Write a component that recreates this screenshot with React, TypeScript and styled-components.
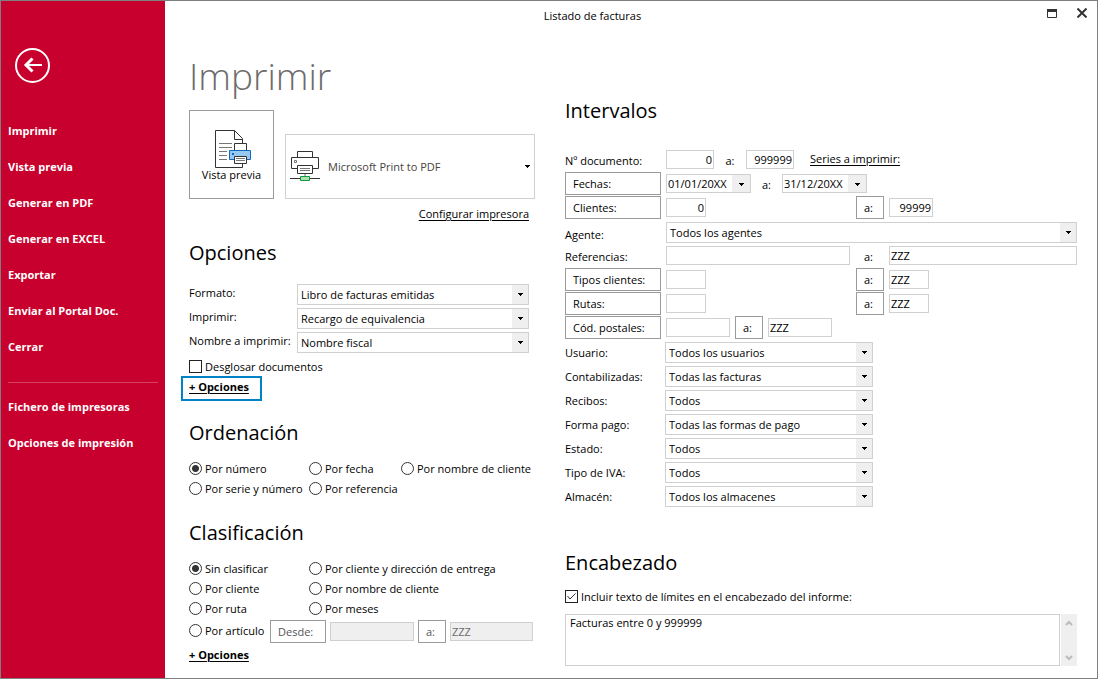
import React from "react";
import styled, { createGlobalStyle } from "styled-components";

const GlobalStyle = createGlobalStyle`
  *, *::before, *::after { box-sizing: border-box; }
  body { margin: 0; background: #fff; }
  body, button, input, select, textarea {
    font-family: "Open Sans", "Noto Sans", sans-serif;
    font-size: 11px;
    color: #000;
  }
  button, input, select, textarea { margin: 0; border-radius: 0; outline: none; }
`;

const line = "#d0d0d0";
const frame = "#9b9b9b";

const Window = styled.div`
  display: flex;
  min-height: 100vh;
  border: 1px solid #7f7f7f;
  background: #fff;
`;

const Sidebar = styled.aside`
  flex: none;
  width: 164px;
  padding: 47px 7px 0;
  background: #c8002d;
`;

const BackButton = styled.button`
  display: block;
  width: 35px;
  height: 35px;
  margin: 0 0 30px 7px;
  padding: 0;
  border: 0;
  background: none;
`;

const Nav = styled.nav`
  display: flex;
  flex-direction: column;
`;

const NavLink = styled.a`
  height: 36px;
  line-height: 36px;
  font-weight: 700;
  color: #fff;
  text-decoration: none;
  white-space: nowrap;
`;

const Divider = styled.hr`
  width: 100%;
  height: 1px;
  margin: 17px 0 6px;
  border: 0;
  background: #d8405f;
`;

const Content = styled.div`
  flex: 1;
  min-width: 0;
`;

const TitleBar = styled.header`
  display: flex;
  height: 31px;
`;

const WindowTitle = styled.div`
  flex: 1;
  line-height: 29px;
  text-align: center;
`;

const Controls = styled.div`
  display: flex;
  justify-content: flex-end;
  gap: 20px;
  width: 77px;
  height: 24px;
  padding-right: 10px;
`;

const ControlButton = styled.button`
  width: 10px;
  padding: 0;
  border: 0;
  background: none;
  line-height: 0;
`;

const Columns = styled.main`
  display: grid;
  grid-template-columns: 346px minmax(0, 1fr);
  column-gap: 30px;
  padding: 20px 20px 12px 24px;
`;

const Column = styled.div<{ $top?: number }>`
  padding-top: ${(p) => p.$top ?? 0}px;
`;

const PageTitle = styled.h1`
  margin: 0 0 10px;
  font-size: 37px;
  line-height: 48px;
  font-weight: 300;
  color: #6c6c6c;
`;

const Heading = styled.h2<{ $top: number; $bottom: number }>`
  margin: ${(p) => p.$top}px 0 ${(p) => p.$bottom}px;
  font-size: 20px;
  line-height: 28px;
  font-weight: 400;
`;

const PrinterRow = styled.div`
  display: flex;
  align-items: flex-end;
  gap: 11px;
`;

const PreviewButton = styled.button`
  display: flex;
  flex-direction: column;
  align-items: center;
  width: 85px;
  height: 89px;
  padding: 19px 0 0;
  border: 1px solid ${frame};
  background: #fff;
  line-height: 12px;
`;

const PrinterPicker = styled.div`
  position: relative;
  flex: 1;
  height: 65px;

  > svg:first-child { position: absolute; left: 5px; top: 17px; pointer-events: none; }
  > svg:last-child { position: absolute; right: 4px; top: 31px; pointer-events: none; }
`;

const PrinterSelect = styled.select`
  appearance: none;
  width: 100%;
  height: 100%;
  padding: 0 20px 0 42px;
  border: 1px solid ${line};
  background: #fff;
  color: #444;
`;

const LinkRow = styled.div`
  display: flex;
  justify-content: flex-end;
  height: 20px;
  margin-top: 5px;
  padding-right: 6px;
`;

const TextLink = styled.a<{ $bold?: boolean; $height?: number }>`
  display: inline-block;
  line-height: ${(p) => p.$height ?? 20}px;
  font-weight: ${(p) => (p.$bold ? 700 : 400)};
  color: #000;
  text-underline-offset: 2px;
  white-space: nowrap;
`;

const Highlight = styled.div`
  display: flex;
  align-items: flex-start;
  width: 81px;
  height: 25px;
  margin-left: -8px;
  padding-left: 6px;
  border: 2px solid #0083c6;
`;

const Row = styled.div<{ $label?: number }>`
  display: grid;
  grid-template-columns: ${(p) => p.$label ?? 101}px minmax(0, 1fr);
  align-items: start;
  height: 24px;
`;

const Cells = styled.div`
  display: flex;
  align-items: flex-start;
`;

const RangeCells = styled.div`
  display: grid;
  grid-template-columns: 190px 28px minmax(0, 1fr);
  align-items: start;
`;

const Label = styled.label<{ $height?: number }>`
  line-height: ${(p) => p.$height ?? 26}px;
  white-space: nowrap;
`;

const To = styled.span<{ $width: number }>`
  width: ${(p) => p.$width}px;
  line-height: 26px;
  text-align: center;
`;

const BoxButton = styled.button<{ $width: number; $gap?: number }>`
  flex: none;
  width: ${(p) => p.$width}px;
  height: 23px;
  margin-left: ${(p) => p.$gap ?? 0}px;
  padding: 0 7px;
  border: 1px solid ${frame};
  background: #fff;
  text-align: left;
  white-space: nowrap;

  &:disabled { color: #555; }
`;

const Field = styled.input<{ $width?: number; $gap?: number; $right?: boolean }>`
  width: ${(p) => (p.$width ? `${p.$width}px` : `calc(100% - ${p.$gap ?? 0}px)`)};
  height: 19px;
  margin: 2px 0 0 ${(p) => p.$gap ?? 0}px;
  padding: 0 1px 1px;
  border: 1px solid ${line};
  background: #fff;
  text-align: ${(p) => (p.$right ? "right" : "left")};

  &:disabled { background: #efefef; color: #6d6d6d; }
`;

const DateBox = styled.div`
  display: flex;
  width: 85px;
  height: 19px;
  margin-top: 2px;
  border: 1px solid ${line};
`;

const DateInput = styled.input`
  flex: 1;
  min-width: 0;
  padding: 0 1px 1px;
  border: 0;
`;

const DropButton = styled.button`
  display: flex;
  align-items: center;
  justify-content: center;
  width: 18px;
  padding: 2px 0 0 1px;
  border: 0;
  background: #efefef;
`;

const SelectBox = styled.div<{ $width?: number }>`
  position: relative;
  width: ${(p) => (p.$width ? `${p.$width}px` : "100%")};
  height: 21px;
  margin-top: 2px;

  > svg { position: absolute; right: 5px; top: 9px; pointer-events: none; }
`;

const SelectInput = styled.select`
  appearance: none;
  width: 100%;
  height: 100%;
  padding: 0 20px 0 3px;
  border: 1px solid ${line};
  background: linear-gradient(#efefef, #efefef) right / 16px 100% no-repeat #fff;
`;

const Choice = styled.label<{ $height?: number; $top?: number }>`
  display: flex;
  align-items: center;
  gap: 3px;
  height: ${(p) => p.$height ?? 20}px;
  padding-top: ${(p) => p.$top ?? 0}px;
  white-space: nowrap;
`;

const Radio = styled.input.attrs({ type: "radio" })`
  appearance: none;
  flex: none;
  width: 13px;
  height: 13px;
  border: 1px solid #333;
  border-radius: 50%;
  background: #fff;

  &:checked { background: radial-gradient(circle, #333 3px, #fff 4px); }
`;

const CheckWrap = styled.span`
  position: relative;
  display: block;
  width: 13px;
  height: 13px;

  > svg { position: absolute; left: 2px; top: 3px; pointer-events: none; }
`;

const Check = styled.input.attrs({ type: "checkbox" })`
  appearance: none;
  display: block;
  width: 13px;
  height: 13px;
  border: 1px solid #222;
  background: #fff;
`;

const RadioGrid = styled.div<{ $cols: string }>`
  display: grid;
  grid-template-columns: ${(p) => p.$cols};
`;

const ArticleRow = styled.div`
  display: flex;
  height: 27px;
  padding-top: 2px;
`;

const ArticleChoice = styled.div`
  width: 81px;
`;

const HeaderText = styled.div`
  display: flex;
  gap: 1px;
  height: 52px;
  margin-top: 8px;
`;

const TextArea = styled.textarea`
  flex: 1;
  min-width: 0;
  padding: 0 4px;
  border: 1px solid ${line};
  resize: none;
  overflow: hidden;
  line-height: 16px;
`;

const ScrollBar = styled.div`
  display: flex;
  flex-direction: column;
  justify-content: space-between;
  width: 16px;
  background: #efefef;
`;

const ScrollButton = styled.button`
  height: 17px;
  padding: 0;
  border: 0;
  background: none;
  line-height: 0;
`;

const SeriesLink = styled(TextLink)`
  margin-left: 16px;
`;

const Arrow = () => (
  <svg width="6" height="3" viewBox="0 0 6 3" aria-hidden="true" shapeRendering="crispEdges">
    <path d="M0 0h5v1H0zM1 1h3v1H1zM2 2h1v1H2z" fill="#000" />
  </svg>
);

const Chevron = ({ down }: { down?: boolean }) => (
  <svg width="8" height="6" viewBox="0 0 8 6" aria-hidden="true">
    <path d={down ? "M1 1l3 3 3-3" : "M1 5l3-3 3 3"} fill="none" stroke="#bcbcbc" strokeWidth="2" />
  </svg>
);

const PreviewIcon = () => (
  <svg width="41" height="39" viewBox="-4 0 41 39" fill="none" aria-hidden="true">
    <path d="M27.500 34v3.500H.5V.5h19l8 8V14M19.500.5v9h8" stroke="#333" />
    <path d="M4 13.500h13M4 17.500h13M4 21.500h8M4 25.500h8M4 29.500h8" stroke="#777" />
    <path d="M19.500 13.500h12v7h-12z" fill="#fff" stroke="#333" />
    <path d="M14.500 20.500h21v9h-21z" fill="#97c9f0" stroke="#1268b8" />
    <path d="M17 23h2v2h-2z" fill="#1268b8" />
    <path d="M19.500 26.500h12v7h-12z" fill="#fff" stroke="#333" />
    <path d="M21 28.500h9M21 30.500h9" stroke="#777" />
  </svg>
);

const PrinterIcon = () => (
  <svg width="30" height="31" viewBox="0 0 30 31" fill="none" aria-hidden="true">
    <path d="M7.500.5h15v6h-15z" fill="#fff" stroke="#333" />
    <path d="M1.500 6.500h27v11h-27z" fill="#fff" stroke="#333" />
    <path d="M4.500 9.500h2v2h-2z" stroke="#777" />
    <path d="M7.500 14.500h15v8h-15z" fill="#fff" stroke="#333" />
    <path d="M10 17.500h10M10 19.500h10" stroke="#777" />
    <path d="M15 23v2" stroke="#b5b5b5" strokeWidth="2" />
    <path d="M0 27.500h30" stroke="#333" />
    <path d="M10.500 25.500h9v4h-9z" fill="#b0dfb4" stroke="#0f9b40" />
  </svg>
);

const Select = ({ id, value, width }: { id: string; value: string; width?: number }) => (
  <SelectBox $width={width}>
    <SelectInput id={id} defaultValue={value}>
      <option>{value}</option>
    </SelectInput>
    <Arrow />
  </SelectBox>
);

const DateField = ({ id, value, label }: { id: string; value: string; label: string }) => (
  <DateBox>
    <DateInput id={id} defaultValue={value} aria-label={label} />
    <DropButton type="button" aria-label={`Calendario ${label}`}>
      <Arrow />
    </DropButton>
  </DateBox>
);

const RadioChoice = ({ name, text, checked }: { name: string; text: string; checked?: boolean }) => (
  <Choice>
    <Radio name={name} defaultChecked={checked} />
    {text}
  </Choice>
);

const mainLinks = [
  "Imprimir",
  "Vista previa",
  "Generar en PDF",
  "Generar en EXCEL",
  "Exportar",
  "Enviar al Portal Doc.",
  "Cerrar",
];

const optionRows = [
  ["formato", "Formato:", "Libro de facturas emitidas"],
  ["imprimir", "Imprimir:", "Recargo de equivalencia"],
  ["nombre", "Nombre a imprimir:", "Nombre fiscal"],
];

const filterRows = [
  ["usuario", "Usuario:", "Todos los usuarios"],
  ["contabilizadas", "Contabilizadas:", "Todas las facturas"],
  ["recibos", "Recibos:", "Todos"],
  ["forma-pago", "Forma pago:", "Todas las formas de pago"],
  ["estado", "Estado:", "Todos"],
  ["tipo-iva", "Tipo de IVA:", "Todos"],
  ["almacen", "Almacén:", "Todos los almacenes"],
];

export default function App() {
  return (
    <>
      <GlobalStyle />
      <Window>
        <Sidebar>
          <BackButton type="button" aria-label="Volver">
            <svg width="35" height="35" viewBox="0 0 35 35" fill="none" stroke="#fff" strokeWidth="2" aria-hidden="true">
              <circle cx="17.500" cy="17.500" r="16.500" />
              <path d="M27 17H11" />
              <path d="M17.500 10.500L11 17l6.500 6.500" strokeWidth="3" />
            </svg>
          </BackButton>
          <Nav>
            {mainLinks.map((text) => (
              <NavLink href="#" key={text}>{text}</NavLink>
            ))}
            <Divider />
            <NavLink href="#">Fichero de impresoras</NavLink>
            <NavLink href="#">Opciones de impresión</NavLink>
          </Nav>
        </Sidebar>

        <Content>
          <TitleBar>
            <WindowTitle>Listado de facturas</WindowTitle>
            <Controls>
              <ControlButton type="button" aria-label="Maximizar">
                <svg width="10" height="9" viewBox="0 0 10 9" aria-hidden="true">
                  <path d="M.5 1.500h9v7h-9z" fill="none" stroke="#333" />
                  <path d="M0 0h10v3H0z" fill="#333" />
                </svg>
              </ControlButton>
              <ControlButton type="button" aria-label="Cerrar ventana">
                <svg width="10" height="10" viewBox="0 0 10 10" aria-hidden="true">
                  <path d="M.5.5l9 9M9.500.5l-9 9" stroke="#333" strokeWidth="2" />
                </svg>
              </ControlButton>
            </Controls>
          </TitleBar>

          <Columns>
            <Column>
              <PageTitle>Imprimir</PageTitle>
              <PrinterRow>
                <PreviewButton type="button">
                  <PreviewIcon />
                  Vista previa
                </PreviewButton>
                <PrinterPicker>
                  <PrinterIcon />
                  <PrinterSelect aria-label="Impresora" defaultValue="Microsoft Print to PDF">
                    <option>Microsoft Print to PDF</option>
                  </PrinterSelect>
                  <Arrow />
                </PrinterPicker>
              </PrinterRow>
              <LinkRow>
                <TextLink href="#">Configurar impresora</TextLink>
              </LinkRow>

              <Heading $top={15} $bottom={15}>Opciones</Heading>
              {optionRows.map(([id, label, value]) => (
                <Row $label={108} key={id}>
                  <Label htmlFor={id} $height={22}>{label}</Label>
                  <Select id={id} value={value} width={232} />
                </Row>
              ))}
              <Choice $height={22} $top={2}>
                <Check />
                Desglosar documentos
              </Choice>
              <Highlight>
                <TextLink href="#" $bold $height={18}>+ Opciones</TextLink>
              </Highlight>

              <Heading $top={18} $bottom={11}>Ordenación</Heading>
              <RadioGrid $cols="120px 92px 1fr">
                <RadioChoice name="orden" text="Por número" checked />
                <RadioChoice name="orden" text="Por fecha" />
                <RadioChoice name="orden" text="Por nombre de cliente" />
                <RadioChoice name="orden" text="Por serie y número" />
                <RadioChoice name="orden" text="Por referencia" />
              </RadioGrid>

              <Heading $top={21} $bottom={11}>Clasificación</Heading>
              <RadioGrid $cols="120px 1fr">
                <RadioChoice name="clase" text="Sin clasificar" checked />
                <RadioChoice name="clase" text="Por cliente y dirección de entrega" />
                <RadioChoice name="clase" text="Por cliente" />
                <RadioChoice name="clase" text="Por nombre de cliente" />
                <RadioChoice name="clase" text="Por ruta" />
                <RadioChoice name="clase" text="Por meses" />
              </RadioGrid>
              <ArticleRow>
                <ArticleChoice>
                  <RadioChoice name="clase" text="Por artículo" />
                </ArticleChoice>
                <BoxButton type="button" disabled $width={56}>Desde:</BoxButton>
                <Field disabled aria-label="Desde artículo" $width={84} $gap={4} />
                <BoxButton type="button" disabled $width={28} $gap={4}>a:</BoxButton>
                <Field disabled aria-label="Hasta artículo" defaultValue="ZZZ" $width={83} $gap={4} />
              </ArticleRow>
              <TextLink href="#" $bold>+ Opciones</TextLink>
            </Column>

            <Column $top={45}>
              <Heading $top={0} $bottom={23}>Intervalos</Heading>
              <Row>
                <Label htmlFor="doc-desde">Nº documento:</Label>
                <Cells>
                  <Field id="doc-desde" defaultValue="0" $width={48} $right />
                  <To $width={32}>a:</To>
                  <Field aria-label="Hasta documento" defaultValue="999999" $width={48} $right />
                  <SeriesLink href="#" $height={22}>Series a imprimir:</SeriesLink>
                </Cells>
              </Row>
              <Row>
                <BoxButton type="button" $width={96}>Fechas:</BoxButton>
                <Cells>
                  <DateField id="fecha-desde" value="01/01/20XX" label="Desde fecha" />
                  <To $width={31}>a:</To>
                  <DateField id="fecha-hasta" value="31/12/20XX" label="Hasta fecha" />
                </Cells>
              </Row>
              <Row>
                <BoxButton type="button" $width={96}>Clientes:</BoxButton>
                <RangeCells>
                  <Field aria-label="Desde cliente" defaultValue="0" $width={40} $right />
                  <BoxButton type="button" $width={28}>a:</BoxButton>
                  <Field aria-label="Hasta cliente" defaultValue="99999" $width={44} $gap={5} $right />
                </RangeCells>
              </Row>
              <Row>
                <Label htmlFor="agente" $height={29}>Agente:</Label>
                <Select id="agente" value="Todos los agentes" />
              </Row>
              <Row>
                <Label htmlFor="referencias">Referencias:</Label>
                <RangeCells>
                  <Field id="referencias" $width={184} />
                  <To $width={25}>a:</To>
                  <Field aria-label="Hasta referencia" defaultValue="ZZZ" $gap={5} />
                </RangeCells>
              </Row>
              {["Tipos clientes:", "Rutas:"].map((text) => (
                <Row key={text}>
                  <BoxButton type="button" $width={96}>{text}</BoxButton>
                  <RangeCells>
                    <Field aria-label={`Desde ${text}`} $width={40} />
                    <BoxButton type="button" $width={28}>a:</BoxButton>
                    <Field aria-label={`Hasta ${text}`} defaultValue="ZZZ" $width={40} $gap={5} />
                  </RangeCells>
                </Row>
              ))}
              <Row>
                <BoxButton type="button" $width={96}>Cód. postales:</BoxButton>
                <Cells>
                  <Field aria-label="Desde código postal" $width={64} />
                  <BoxButton type="button" $width={28} $gap={5}>a:</BoxButton>
                  <Field aria-label="Hasta código postal" defaultValue="ZZZ" $width={64} $gap={5} />
                </Cells>
              </Row>
              {filterRows.map(([id, label, value]) => (
                <Row $label={100} key={id}>
                  <Label htmlFor={id}>{label}</Label>
                  <Select id={id} value={value} width={208} />
                </Row>
              ))}

              <Heading $top={41} $bottom={9}>Encabezado</Heading>
              <Choice>
                <CheckWrap>
                  <Check defaultChecked />
                  <svg width="9" height="7" viewBox="0 0 9 7" fill="none" aria-hidden="true">
                    <path d="M.5 3l2.500 3L8.500.5" stroke="#333" />
                  </svg>
                </CheckWrap>
                Incluir texto de límites en el encabezado del informe:
              </Choice>
              <HeaderText>
                <TextArea aria-label="Texto del encabezado" defaultValue="Facturas entre 0 y 999999" />
                <ScrollBar>
                  <ScrollButton type="button" aria-label="Subir"><Chevron /></ScrollButton>
                  <ScrollButton type="button" aria-label="Bajar"><Chevron down /></ScrollButton>
                </ScrollBar>
              </HeaderText>
            </Column>
          </Columns>
        </Content>
      </Window>
    </>
  );
}
